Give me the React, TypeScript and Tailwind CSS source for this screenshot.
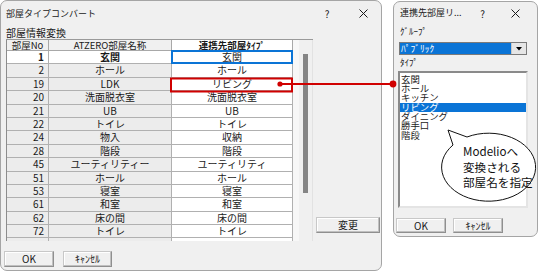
import React from "react";

type Row = [number, string, string];

const rows: Row[] = [
  [1, "玄関", "玄関"],
  [2, "ホール", "ホール"],
  [19, "LDK", "リビング"],
  [20, "洗面脱衣室", "洗面脱衣室"],
  [21, "UB", "UB"],
  [22, "トイレ", "トイレ"],
  [24, "物入", "収納"],
  [28, "階段", "階段"],
  [45, "ユーティリティー", "ユーティリティ"],
  [51, "ホール", "ホール"],
  [53, "寝室", "寝室"],
  [61, "和室", "和室"],
  [62, "床の間", "床の間"],
  [72, "トイレ", "トイレ"],
];

const roomTypes = ["玄関", "ホール", "キッチン", "リビング", "ダイニング", "勝手口", "階段"];

const CloseIcon = () => (
  <svg width="9" height="9" viewBox="0 0 9 9" aria-hidden="true">
    <path d="M0.5 0.5 L8.5 8.5 M8.5 0.5 L0.5 8.5" stroke="#1a1a1a" strokeWidth="1" />
  </svg>
);

const WinButton = ({ label, className = "" }: { label: string; className?: string }) => (
  <div
    className={`flex items-center justify-center bg-[#f0f0f0] border border-[#8f8f8f] border-t-[#c8c8c8] border-l-[#c8c8c8] shadow-[inset_-1px_-1px_0_#c0c0c0,inset_1px_1px_0_#ffffff] text-[10px] leading-none text-[#1a1a1a] ${className}`}
  >
    {label}
  </div>
);

const RoomGrid = () => (
  <div className="w-[307px] h-[202px] flex border-t border-[#9a9a9a] overflow-hidden">
    <div className="w-[287px] flex flex-col border-l border-[#8c8c8c] bg-[#f0f0f0]">
      <div className="flex h-[11px] text-[9.5px] leading-[10px] border-b border-[#a8a8a8]">
        <div className="w-[42px] border-r border-[#a8a8a8] text-center">部屋No</div>
        <div className="w-[123px] border-r border-[#a8a8a8] text-center">ATZERO部屋名称</div>
        <div className="w-[121px] border-r border-[#a8a8a8] bg-white text-center font-bold">連携先部屋ﾀｲﾌﾟ</div>
      </div>
      {rows.map(([no, name, type], i) => {
        const first = i === 0;
        return (
          <div key={no} className="flex h-[13.4px] shrink-0 text-[10px] leading-[12.4px]">
            <div
              className={`w-[42px] pr-[4px] text-right border-r border-b border-[#b0b0b0] ${first ? "bg-white font-bold" : "bg-[#ececec]"}`}
            >
              {no}
            </div>
            <div
              className={`w-[123px] text-center border-r border-b border-[#b0b0b0] ${first ? "bg-white font-bold" : "bg-[#ececec]"}`}
            >
              {name}
            </div>
            <div className="relative w-[121px] text-center bg-white border-r border-b border-[#b0b0b0]">
              {type}
              {first ? <span className="absolute -left-[1px] -top-[1px] w-[122px] h-[14px] border-2 border-[#0a74d6]" /> : null}
            </div>
          </div>
        );
      })}
      <div className="flex h-[13.4px] shrink-0">
        <div className="w-[42px] bg-[#ececec] border-r border-[#b0b0b0]" />
        <div className="w-[123px] bg-[#ececec] border-r border-[#b0b0b0]" />
        <div className="w-[121px] bg-white border-r border-[#b0b0b0]" />
      </div>
    </div>
    <div className="w-[20px] flex bg-[#f7f7f7] border-r border-[#e2e2e2]">
      <div className="ml-[6px] w-[14px] bg-[#f0f0f0] pt-[14px]">
        <div className="ml-[4px] w-[5px] h-[139px] bg-[#858585]" />
      </div>
    </div>
  </div>
);

const MainDialog = () => (
  <div className="w-[382px] h-[271px] shrink-0 flex flex-col bg-[#f0f0f0] border border-[#a5a5a5] rounded-[7px] text-[#1a1a1a]">
    <div className="h-[25px] flex items-center pl-[5px] text-[9px]">
      <span>部屋タイプコンバート</span>
      <div className="ml-auto flex">
        <span className="w-[36px] text-center text-[10px]">?</span>
        <span className="w-[36px] flex items-center justify-center">
          <CloseIcon />
        </span>
      </div>
    </div>
    <div className="h-[13px] pl-[5px] text-[10px] leading-[13px]">部屋情報変換</div>
    <div className="flex items-end pl-[5px]">
      <RoomGrid />
      <WinButton label="変更" className="ml-[3px] mb-[8px] w-[64px] h-[16px]" />
    </div>
    <div className="flex gap-[9px] pl-[3px] mt-[10px]">
      <WinButton label="OK" className="w-[50px] h-[16px]" />
      <WinButton label="ｷｬﾝｾﾙ" className="w-[49px] h-[16px]" />
    </div>
  </div>
);

const TypeDialog = () => (
  <div className="mt-[1px] w-[145px] h-[236px] shrink-0 flex flex-col bg-[#f0f0f0] border border-[#a5a5a5] rounded-[7px] text-[#1a1a1a]">
    <div className="h-[22px] flex items-center pl-[6px] text-[9px]">
      <span>連携先部屋リ...</span>
      <div className="ml-auto flex pr-[5px]">
        <span className="w-[33px] text-center text-[10px]">?</span>
        <span className="w-[33px] flex items-center justify-center">
          <CloseIcon />
        </span>
      </div>
    </div>
    <div className="h-[15px] pl-[6px] text-[9px] leading-[15px]">ｸﾞﾙｰﾌﾟ</div>
    <div className="ml-[5px] mt-[3px] w-[128px] h-[13px] flex border border-[#7a7a7a] bg-white">
      <div className="flex-1 bg-[#0a74d6] text-white text-[9.5px] leading-[11px] pl-[1px]">ﾊﾟﾌﾞﾘｯｸ</div>
      <div className="w-[15px] flex items-center justify-center bg-[#e6e6e6] border-l border-[#c8c8c8]">
        <svg width="6" height="4" viewBox="0 0 6 4" aria-hidden="true">
          <path d="M0 0 H6 L3 3.5 Z" fill="#000" />
        </svg>
      </div>
    </div>
    <div className="h-[16px] pl-[6px] text-[9px] leading-[16px]">ﾀｲﾌﾟ</div>
    <div className="ml-[4px] w-[130px] h-[137px] bg-white border-2 border-[#8a8a8a] border-r-[#e4e4e4] border-b-[#e4e4e4] pt-[1.5px] text-[9.4px] leading-[9.4px]">
      {roomTypes.map((t) => (
        <div key={t} className={`h-[9.4px] pl-[1px] ${t === "リビング" ? "bg-[#0a74d6] text-white" : ""}`}>
          {t}
        </div>
      ))}
    </div>
    <div className="flex gap-[7px] pl-[2px] mt-[10px]">
      <WinButton label="OK" className="w-[50px] h-[15px]" />
      <WinButton label="ｷｬﾝｾﾙ" className="w-[50px] h-[15px]" />
    </div>
  </div>
);

export default function App() {
  return (
    <div className="relative w-[552px] h-[272px] bg-white overflow-hidden font-['Noto_Sans_CJK_JP',sans-serif]">
      <div className="flex items-start gap-[11px]">
        <MainDialog />
        <TypeDialog />
      </div>

      {/* annotation: link from grid cell to type list, and the callout */}
      <svg className="absolute left-0 top-0 pointer-events-none" width="552" height="272" viewBox="0 0 552 272">
        <rect x="171" y="78.5" width="121" height="13" fill="none" stroke="#d00000" strokeWidth="2" />
        <line x1="280" y1="84" x2="393" y2="84" stroke="#d00000" strokeWidth="2" />
        <circle cx="280" cy="84" r="2.6" fill="#d00000" />
        <circle cx="393" cy="84" r="3.4" fill="#d00000" />
        <path d="M467 137 L448 130 L453 145 A47 34 0 1 0 467 137 Z" fill="#fff" stroke="#111" strokeWidth="1" />
      </svg>
      <div className="absolute left-[463px] top-[144px] text-[11.6px] leading-[15.5px] text-[#111]">
        <div>Modelioへ</div>
        <div>変換される</div>
        <div>部屋名を指定</div>
      </div>
    </div>
  );
}
